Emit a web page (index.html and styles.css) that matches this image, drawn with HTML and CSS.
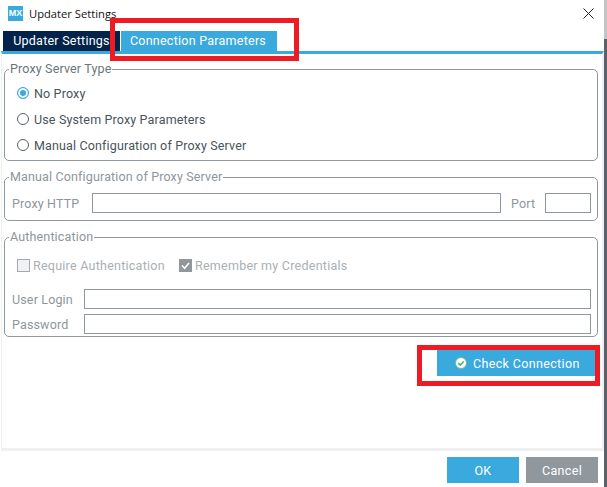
FILE: index.html
```html
<!DOCTYPE html>
<html lang="en">
<head>
    <meta charset="UTF-8">
    <title>Updater Settings</title>
    <link rel="stylesheet" href="styles.css">
</head>
<body>
<div id="dialog">
    <div id="titlebar">
        <span class="logo">MX</span>
        <span class="title">Updater Settings</span>
        <svg class="close" width="11" height="11" viewBox="0 0 11 11"><path d="M.5.5l10 10M10.5.5l-10 10" stroke="#222" fill="none"/></svg>
    </div>
    <div id="tabs">
        <div class="tab dark">Updater Settings</div>
        <div class="tab active">Connection Parameters</div>
    </div>
    <div id="content">
        <fieldset class="group group-type">
            <legend>Proxy Server Type</legend>
            <label class="radio-row"><span class="radio checked"></span>No Proxy</label>
            <label class="radio-row"><span class="radio"></span>Use System Proxy Parameters</label>
            <label class="radio-row"><span class="radio"></span>Manual Configuration of Proxy Server</label>
        </fieldset>
        <fieldset class="group group-manual disabled">
            <legend>Manual Configuration of Proxy Server</legend>
            <div class="field-row">
                <span class="field-label proxy-label">Proxy HTTP</span>
                <span class="input grow"></span>
                <span class="field-label port-label">Port</span>
                <span class="input port"></span>
            </div>
        </fieldset>
        <fieldset class="group group-auth disabled">
            <legend>Authentication</legend>
            <div class="check-row">
                <span class="check-item first"><span class="check"></span>Require Authentication</span>
                <span class="check-item"><span class="check on"><svg width="13" height="13" viewBox="0 0 13 13"><path d="M3 6.5l2.6 2.8L10 4" stroke="#fff" stroke-width="1.6" fill="none"/></svg></span>Remember my Credentials</span>
            </div>
            <div class="field-row login-row">
                <span class="field-label login-label">User Login</span>
                <span class="input grow"></span>
            </div>
            <div class="field-row">
                <span class="field-label login-label">Password</span>
                <span class="input grow"></span>
            </div>
        </fieldset>
        <div class="check-wrap">
            <button class="btn btn-check">
                <svg width="12" height="12" viewBox="0 0 12 12"><circle cx="6" cy="6" r="5.5" fill="#fff" stroke="#6cc08b"/><path d="M3.3 6.1l2 2 3.4-3.6" stroke="#4caf78" stroke-width="1.6" fill="none"/></svg>
                Check Connection
            </button>
        </div>
    </div>
    <div id="footer">
        <button class="btn btn-ok">OK</button>
        <button class="btn btn-cancel">Cancel</button>
    </div>
</div>
<div class="marker marker-tab"></div>
<div class="marker marker-check"></div>
</body>
</html>
```

FILE: styles.css
```css
html, body {
    height: 100%;
}

body {
    margin: 0;
    font-family: Roboto, "Liberation Sans", sans-serif;
    font-size: 12.5px;
    color: #49535b;
    background: linear-gradient(#c2c4c6 0, #c2c4c6 39px, #5b6166 39px);
    overflow: hidden;
}

#dialog {
    width: 604px;
    height: 487px;
    background-color: #fff;
    display: flex;
    flex-direction: column;
}

#titlebar {
    height: 31px;
    display: flex;
    align-items: center;
    padding: 0 10px 5px 8px;
    box-sizing: border-box;
}

.logo {
    width: 15px;
    height: 15px;
    background-color: #3aa9dd;
    color: #fff;
    font-family: "Liberation Sans", sans-serif;
    font-size: 9px;
    font-weight: bold;
    text-align: center;
    line-height: 15px;
}

.title {
    margin-left: 6px;
    color: #111;
    font-family: "Open Sans", sans-serif;
    font-size: 11.2px;
}

.close {
    margin-left: auto;
}

#tabs {
    display: flex;
    padding-left: 3px;
    height: 20px;
    gap: 1px;
}

.tab {
    height: 20px;
    line-height: 20px;
    text-align: center;
    color: #fff;
    letter-spacing: 0.25px;
}

.tab.dark {
    width: 117px;
    background-color: #03234b;
}

.tab.active {
    width: 154px;
    padding-right: 2px;
    background-color: #3aa9dd;
}

#content {
    flex: 1;
    margin-left: 1px;
    border-top: 3px solid #3aa9dd;
    border-bottom: 3px solid #eff0f2;
    border-left: 1px solid #eff0f2;
    border-right: 2px solid #eff0f2;
    padding: 8px 4px 0 2px;
}

.group {
    margin: 0;
    padding: 0;
    border: 1px solid #90989e;
    border-radius: 5px;
    box-sizing: border-box;
    min-width: 0;
}

.group legend {
    margin-left: 4px;
    padding: 0 1px;
    line-height: 14px;
    color: #6a747c;
    letter-spacing: 0.15px;
}

.group-type {
    height: 99px;
    padding-top: 4px;
}

.group-manual {
    height: 51px;
    margin-top: 9px;
    padding-top: 9px;
}

.group-auth {
    height: 107px;
    margin-top: 9px;
}

.disabled legend {
    color: #8e969c;
}

.radio-row {
    height: 26px;
    display: flex;
    align-items: center;
    margin-left: 12px;
    letter-spacing: 0.15px;
}

.radio {
    width: 10px;
    height: 10px;
    border: 1px solid #59636b;
    border-radius: 50%;
    margin-right: 5px;
}

.radio.checked {
    border-color: #3aa9dd;
    background-color: #3aa9dd;
    box-shadow: inset 0 0 0 2px #fff;
}

.field-row {
    display: flex;
    align-items: center;
    padding: 0 6px 0 7px;
    color: #8e969c;
    letter-spacing: 0.15px;
}

.input {
    height: 20px;
    border: 1px solid #90989e;
    box-sizing: border-box;
    background-color: #fff;
}

.grow {
    flex: 1;
}

.proxy-label {
    width: 80px;
}

.port-label {
    width: 44px;
    padding-left: 10px;
    box-sizing: border-box;
}

.input.port {
    width: 46px;
}

.login-label {
    width: 72px;
}

.login-row {
    margin-bottom: 5px;
}

.check-row {
    display: flex;
    height: 32px;
    align-items: center;
    margin: 5px 0 8px;
    padding-left: 12px;
    color: #a9afb4;
    letter-spacing: 0.25px;
}

.check-item {
    display: flex;
    align-items: center;
}

.check-item.first {
    width: 162px;
}

.check {
    width: 11px;
    height: 11px;
    border: 1px solid #a4aab0;
    background-color: #f0f1f3;
    margin-right: 3px;
    display: block;
}

.check.on {
    background-color: #90989e;
    border-color: #90989e;
}

.check svg {
    display: block;
    margin: -1px;
}

.check-wrap {
    display: flex;
    justify-content: flex-end;
    padding-top: 13px;
    margin-right: 3px;
}

.btn {
    border: none;
    color: #fff;
    height: 26px;
    font-family: inherit;
    font-size: 12.5px;
    letter-spacing: 0.35px;
    padding: 0;
}

.btn-check {
    width: 158px;
    padding-left: 18px;
    background-color: #3aa9dd;
    display: flex;
    align-items: center;
    gap: 6px;
}

#footer {
    height: 36px;
    display: flex;
    justify-content: flex-end;
    gap: 7px;
    padding: 6px 6px 4px 0;
    box-sizing: border-box;
}

.btn-ok,
.btn-cancel {
    width: 72px;
}

.btn-ok {
    background-color: #3aa9dd;
}

.btn-cancel {
    background-color: #90989e;
}

.marker {
    position: absolute;
    border: 5px solid #ed1c24;
    box-sizing: border-box;
}

.marker-tab {
    left: 110px;
    top: 18px;
    width: 189px;
    height: 43px;
}

.marker-check {
    left: 417px;
    top: 345px;
    width: 183px;
    height: 41px;
}
```
